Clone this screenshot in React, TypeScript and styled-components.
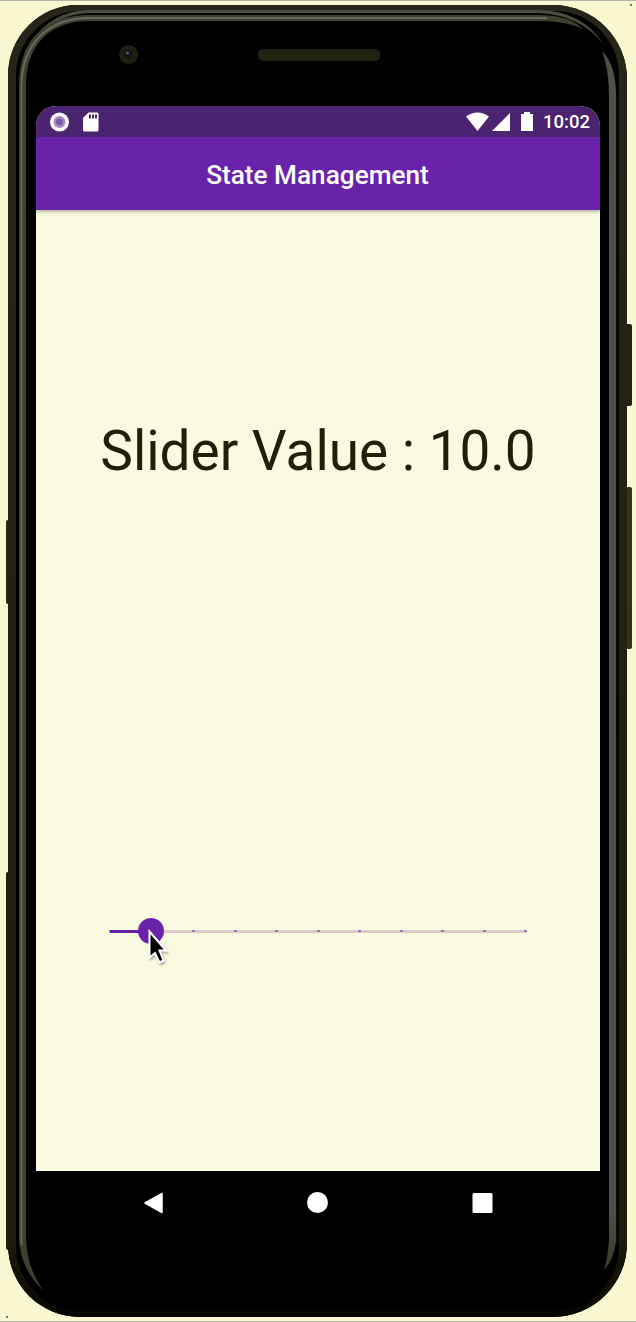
import React from "react";
import styled, { createGlobalStyle } from "styled-components";

const GlobalStyle = createGlobalStyle`
  * { box-sizing: border-box; }
  body { margin: 0; background: #f9f8d0; font-family: Roboto, "Liberation Sans", sans-serif; }
`;

const Stage = styled.main`
  position: relative;
  width: 636px;
  height: 1322px;
  overflow: hidden;
  padding: 4px 9px 5px 8px;
  background: #f9f8d0;
  border-top: 1px solid #b4b4aa;
  border-bottom: 1px solid #b4b4aa;
`;

const SideKey = styled.i<{ $side: "left" | "right"; $top: number; $height: number; $tone: string; $inset: number }>`
  position: absolute;
  ${(p) => p.$side}: ${(p) => p.$inset}px;
  top: ${(p) => p.$top - 1}px;
  width: 8px;
  height: ${(p) => p.$height}px;
  border-radius: 2px;
  background: ${(p) => p.$tone};
`;

const Speck = styled.i<{ $x: number; $y: number }>`
  position: absolute;
  left: ${(p) => p.$x}px;
  top: ${(p) => p.$y}px;
  width: 2px;
  height: 2px;
  background: #77776c;
`;

const Device = styled.div`
  position: relative;
  height: 1312px;
  padding: 101px 27px 0 28px;
  background: #000;
  border-radius: 70px 74px 74px 72px;
  overflow: hidden;
`;

const Bezel = styled.svg`
  position: absolute;
  top: 0;
  left: -1px;
  pointer-events: none;
`;

const Screen = styled.div`
  position: relative;
  display: flex;
  flex-direction: column;
  width: 564px;
  height: 1128px;
  overflow: hidden;
  border-radius: 20px 20px 0 0;
  background: #fafae0;
`;

const StatusBar = styled.div`
  display: flex;
  align-items: center;
  justify-content: space-between;
  flex: none;
  height: 31px;
  padding: 0 10px 0 14px;
  background: #4a2470;
  color: #fff;
`;

const StatusGroup = styled.div`
  display: flex;
  align-items: center;
`;

const Clock = styled.span`
  margin-left: 9px;
  padding-top: 2px;
  font-size: 18.5px;
  font-weight: 500;
  line-height: 29px;
`;

const AppBar = styled.header`
  display: flex;
  align-items: center;
  justify-content: center;
  flex: none;
  height: 73px;
  padding: 2px 1px 0 0;
  background: #6922aa;
  color: #fff;
  box-shadow: 0 1px 4px rgba(0, 0, 0, 0.4);
  clip-path: inset(0 0 -8px 0);
  font-size: 26.2px;
  font-weight: 500;
  z-index: 1;
`;

const Content = styled.section`
  display: flex;
  flex-direction: column;
  align-items: center;
  flex: 1;
  padding-top: 208px;
`;

const ValueLabel = styled.div`
  height: 66px;
  line-height: 66px;
  font-size: 54.9px;
  white-space: nowrap;
  color: #202008;
`;

const Slider = styled.div`
  position: relative;
  display: flex;
  align-items: center;
  justify-content: space-between;
  width: 418px;
  height: 26px;
  margin-top: 434px;
  background: linear-gradient(#dac5cb, #e4cdc4) center / 100% 3px no-repeat;
`;

const Tick = styled.i`
  width: 3px;
  height: 2px;
  border-radius: 1px;
  background: #9865b0;
`;

const ActiveTrack = styled.i`
  position: absolute;
  left: 1px;
  top: 12px;
  width: 42px;
  height: 3px;
  background: #6922aa;
`;

const Thumb = styled.i`
  position: absolute;
  left: 29px;
  top: 0;
  width: 26px;
  height: 26px;
  border-radius: 50%;
  background: #6922aa;
`;

const Pointer = styled.svg`
  position: absolute;
  left: 38px;
  top: 10px;
  filter: drop-shadow(1px 2px 1px rgba(0, 0, 0, 0.3));
`;

const NavBar = styled.nav`
  display: flex;
  align-items: center;
  justify-content: space-between;
  flex: none;
  height: 63px;
  padding: 0 107px;
  background: #000;
`;

const ticks = Array.from({ length: 11 }, (_, i) => i);

function StatusIcons() {
  return (
    <svg width="69" height="22" viewBox="-1 0 69 22" fill="#fff">
      <path d="M0 5.5Q11.5-2.5 23 5.5L11.5 20Z" />
      <path d="M26 20L44 2V20Z" />
      <path d="M55 3h3V1h6v2h3v17H55Z" />
    </svg>
  );
}

export default function App() {
  return (
    <>
      <GlobalStyle />
      <Stage>
        <Speck $x={630} $y={3} />
        <Speck $x={6} $y={1315} />
        <SideKey $side="left" $inset={6} $top={520} $height={84} $tone="#292914" />
        <SideKey $side="left" $inset={6} $top={872} $height={378} $tone="#22220f" />
        <SideKey $side="right" $inset={4} $top={324} $height={82} $tone="#222210" />
        <SideKey $side="right" $inset={4} $top={487} $height={162} $tone="#333316" />
        <Device>
          <Bezel width="620" height="1312" fill="none">
            <defs>
              <linearGradient id="edge" x1="0" y1="0" x2="0" y2="1312" gradientUnits="userSpaceOnUse">
                <stop offset="0" stopColor="#26261a" />
                <stop offset="0.94" stopColor="#1d1d0b" />
                <stop offset="1" stopColor="#050500" />
              </linearGradient>
              <linearGradient id="fade" x1="0" y1="1200" x2="0" y2="1290" gradientUnits="userSpaceOnUse">
                <stop offset="0" stopColor="#50504a" />
                <stop offset="1" stopColor="#33331b" />
              </linearGradient>
            </defs>
            <rect x="5" y="2" width="611" height="1308" rx="69" stroke="url(#edge)" strokeWidth="8" />
            <path d="M25 36Q45 6 82 5H532Q576 6 597 40Q574 10 532 8H82Q48 9 25 36Z" fill="#4c4c3a" />
            <path d="M37 1286Q13 1264 12 1233V80C12 35 38 10 82 10H532Q562 10 576 24Q560 16 532 16H82C43 16 19 40 19 80V1233Q20 1264 37 1286Z" fill="#40402f" />
            <path d="M14.500 1240V80C15 40 40 13 82 13H540" stroke="#68685f" strokeWidth="2" />
            <path d="M595 46Q609 60 609 90V1237Q606 1256 597 1265Q601 1252 602 1235V92Q602 64 595 46Z" fill="url(#fade)" />
            <path d="M610 90V1240" stroke="#0b0b03" strokeWidth="2" />
            <circle cx="121.500" cy="49.500" r="9.500" fill="#202010" />
            <circle cx="121.500" cy="49.500" r="4.500" fill="#131319" />
            <circle cx="120.500" cy="48" r="1.500" fill="#53616f" />
            <rect x="251" y="44" width="122" height="12" rx="5" fill="#222210" />
          </Bezel>
          <Screen>
            <StatusBar>
              <StatusGroup>
                <svg width="50" height="22" viewBox="0 0 50 22">
                  <circle cx="9.500" cy="11" r="9.500" fill="#fff" />
                  <circle cx="9.500" cy="11" r="6" fill="#a78bc4" />
                  <circle cx="9.500" cy="11" r="3.500" fill="#765ba8" />
                  <path d="M38.500 1.500H47q1.500 0 1.500 1.500v16q0 1.500-1.500 1.500H34.500q-1.500 0-1.500-1.500V7Z" fill="#fff" />
                  <path d="M39 3.500h2v4h-2zM42 3.500h2v4h-2zM45 3.500h2v4h-2z" fill="#4a2470" />
                </svg>
              </StatusGroup>
              <StatusGroup>
                <StatusIcons />
                <Clock>10:02</Clock>
              </StatusGroup>
            </StatusBar>
            <AppBar>State Management</AppBar>
            <Content>
              <ValueLabel>Slider Value : 10.0</ValueLabel>
              <Slider>
                {ticks.map((tick) => <Tick key={tick} />)}
                <ActiveTrack />
                <Thumb />
                <Pointer width="24" height="40" viewBox="0 0 24 40">
                  <path d="M2.500 3.500V29.500L8 25L12.500 34.500L16.500 32.500L12.500 22.500H19Z" fill="#000" stroke="#fff" strokeWidth="2" />
                </Pointer>
              </Slider>
            </Content>
            <NavBar>
              <svg width="22" height="24" viewBox="0 0 22 24"><path d="M2 12L19 2.500V21.500Z" fill="#fff" stroke="#fff" strokeWidth="1.500" strokeLinejoin="round" /></svg>
              <svg width="22" height="22"><circle cx="10.500" cy="10.500" r="10.500" fill="#fff" /></svg>
              <svg width="22" height="22"><rect x="1.500" y="1" width="20" height="20" rx="1.500" fill="#fff" /></svg>
            </NavBar>
          </Screen>
        </Device>
      </Stage>
    </>
  );
}
